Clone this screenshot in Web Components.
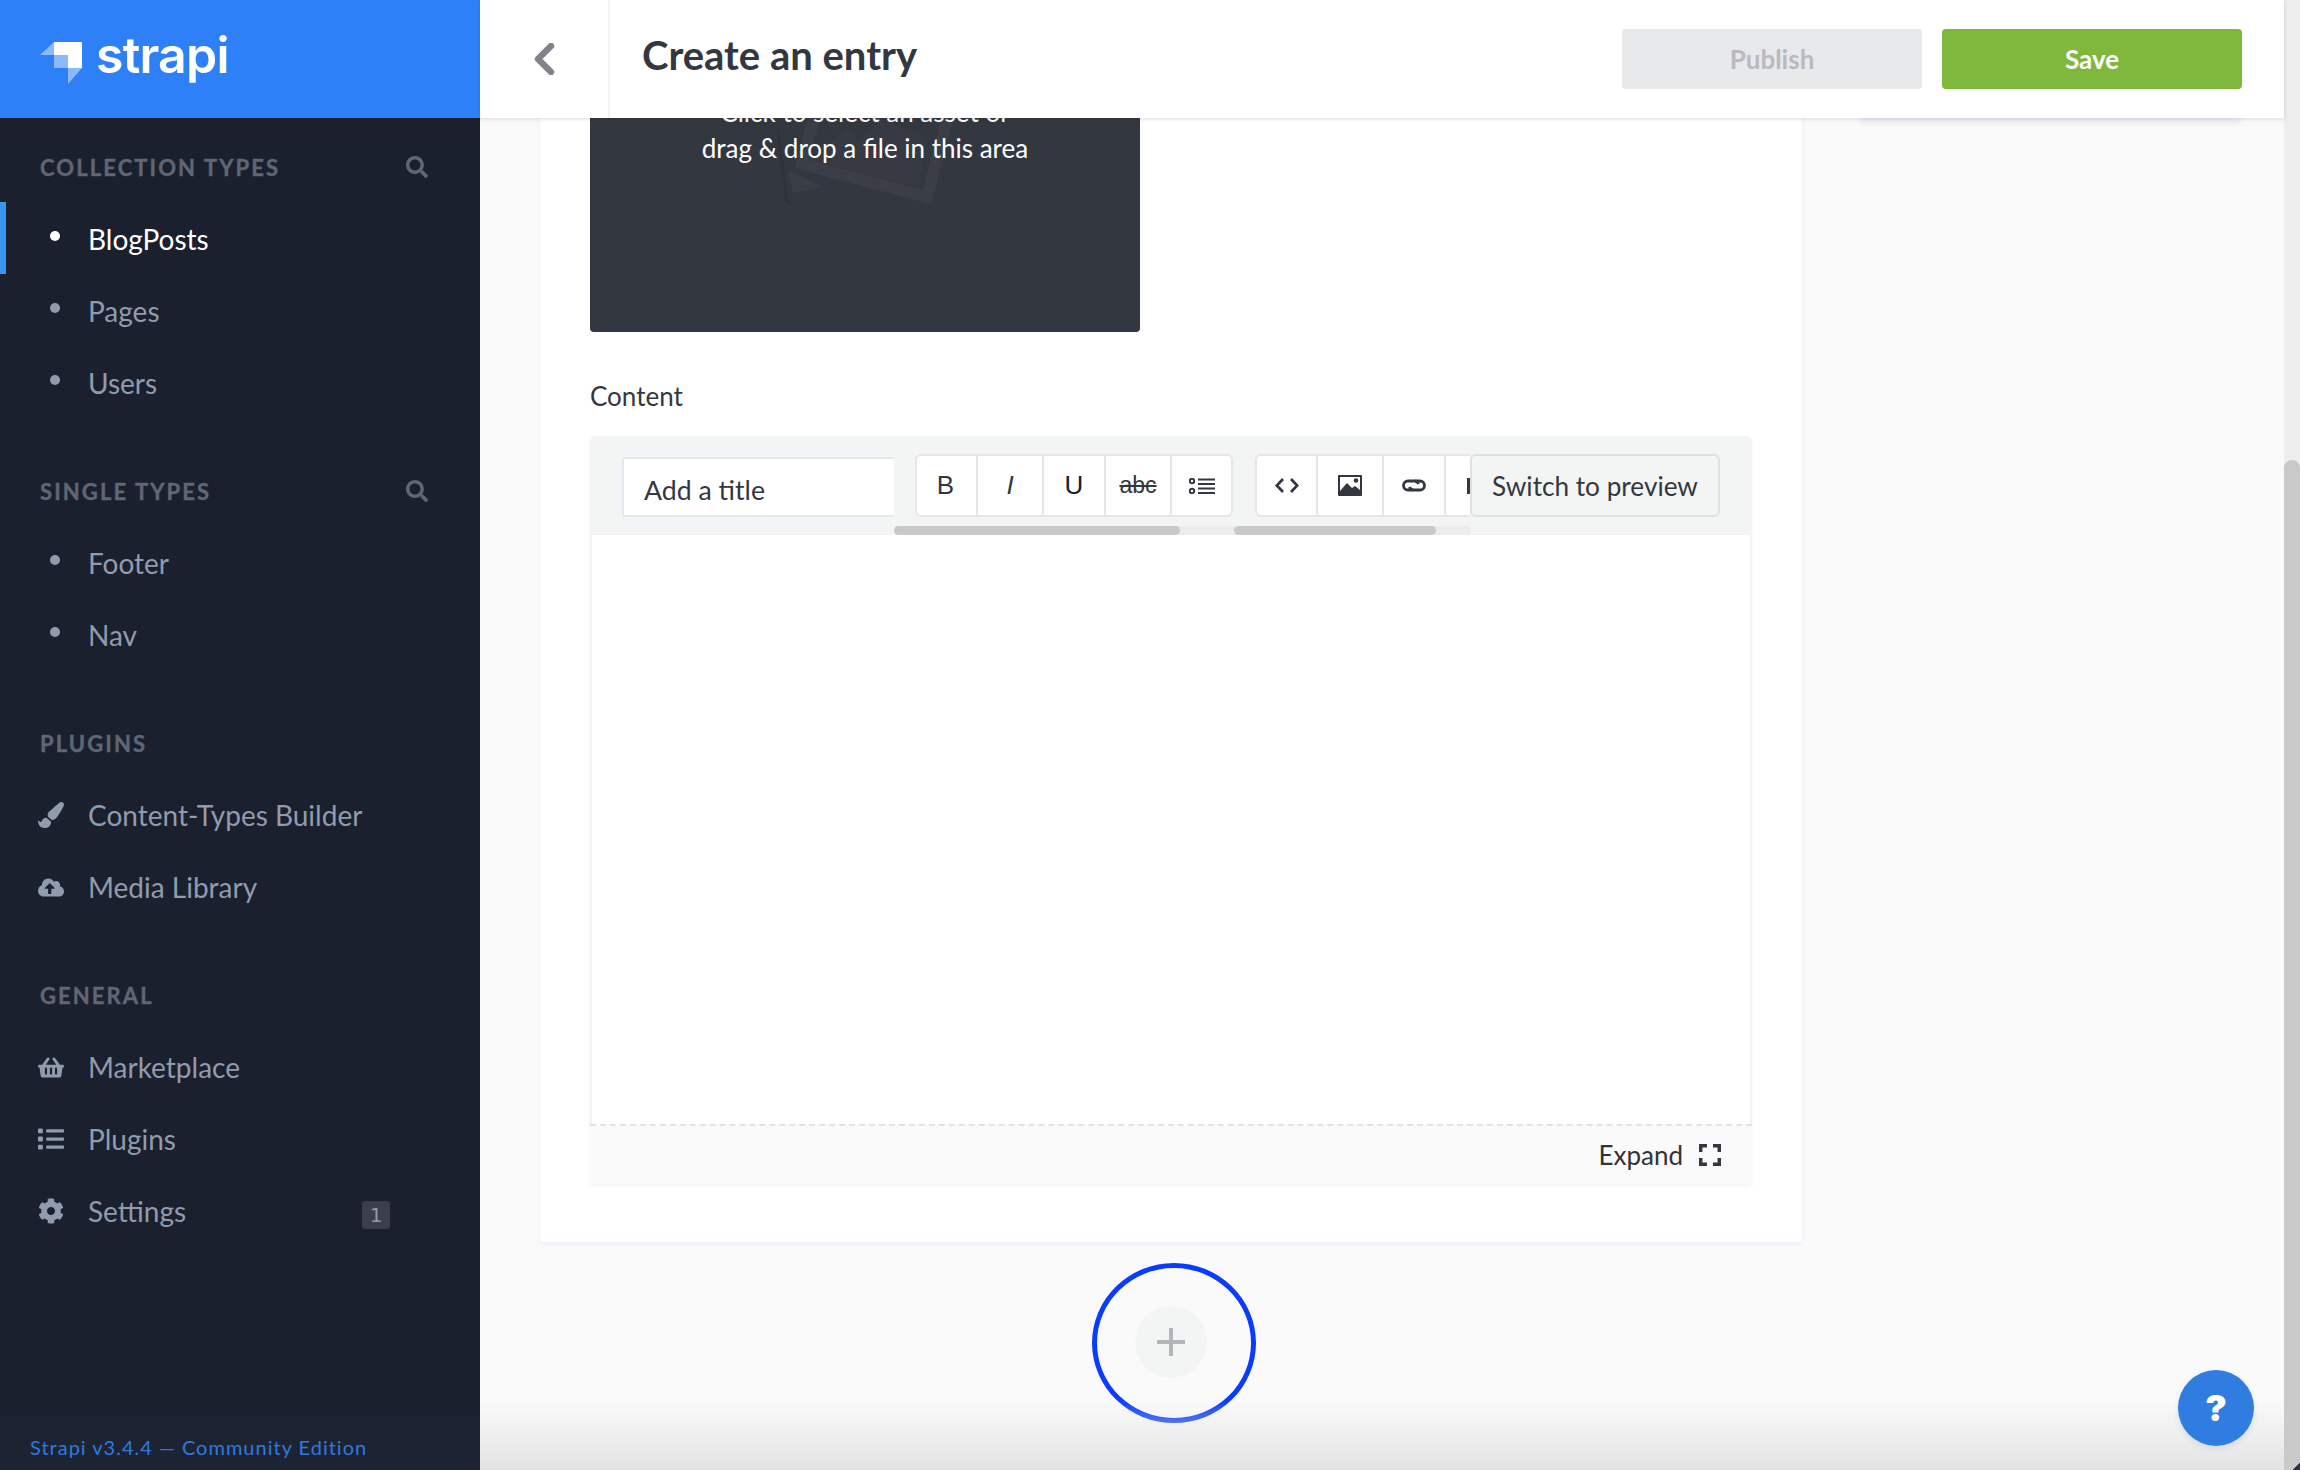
<!DOCTYPE html>
<html>
<head>
<meta charset="utf-8">
<title>Create an entry</title>
<style>
  html, body { margin: 0; height: 100%; overflow: hidden; }
  body { font-family: Lato, "Liberation Sans", sans-serif; }
</style>
</head>
<body>
<app-shell>
  <side-nav slot="side"></side-nav>
  <top-bar slot="top" heading="Create an entry"></top-bar>
  <entry-form slot="content"></entry-form>
  <help-button slot="help"></help-button>
</app-shell>

<script>
const ICONS = {
  search: ['0 0 512 512', 'M505 442.7L405.3 343c-4.5-4.5-10.6-7-17-7H372c27.6-35.3 44-79.7 44-128C416 93.1 322.9 0 208 0S0 93.1 0 208s93.1 208 208 208c48.3 0 92.7-16.4 128-44v16.3c0 6.4 2.5 12.5 7 17l99.7 99.7c9.4 9.4 24.6 9.4 33.9 0l28.3-28.3c9.4-9.4 9.4-24.6.1-34zM208 336c-70.7 0-128-57.2-128-128 0-70.7 57.2-128 128-128 70.7 0 128 57.2 128 128 0 70.7-57.2 128-128 128z'],
  brush: ['0 0 512 512', 'M167.02 309.34c-40.12 2.58-76.53 17.86-97.19 72.3-2.35 6.21-8 9.98-14.59 9.98-11.11 0-45.46-27.67-55.25-34.35C0 439.62 37.93 512 128 512c75.86 0 128-43.77 128-120.19 0-3.11-.65-6.08-.97-9.13l-88.01-73.34zM457.89 0c-15.16 0-29.37 6.71-40.21 16.45C213.27 199.05 192 203.34 192 257.09c0 13.7 3.25 26.76 8.73 38.7l63.82 53.18c7.21 1.8 14.64 3.03 22.39 3.03 62.11 0 98.11-45.47 211.16-256.46 7.38-14.35 13.9-29.85 13.9-45.99C512 20.64 486 0 457.89 0z'],
  cloud: ['0 0 640 512', 'M537.6 226.6c4.1-10.7 6.4-22.4 6.4-34.6 0-53-43-96-96-96-19.7 0-38.1 6-53.3 16.2C367 64.2 315.3 32 256 32c-88.4 0-160 71.6-160 160 0 2.7.1 5.4.2 8.1C40.2 219.8 0 273.2 0 336c0 79.5 64.5 144 144 144h368c70.7 0 128-57.3 128-128 0-61.9-44-113.6-102.4-125.4zM393.4 288H328v112c0 8.8-7.2 16-16 16h-48c-8.8 0-16-7.2-16-16V288h-65.4c-14.3 0-21.4-17.2-11.3-27.3l105.4-105.4c6.2-6.2 16.4-6.2 22.6 0l105.4 105.4c10.1 10.1 2.9 27.3-11.3 27.3z'],
  basket: ['0 0 576 512', 'M576 216v16c0 13.255-10.745 24-24 24h-8l-26.113 182.788C514.509 462.435 494.257 480 470.37 480H105.63c-23.887 0-44.139-17.565-47.518-41.212L32 256h-8c-13.255 0-24-10.745-24-24v-16c0-13.255 10.745-24 24-24h67.341l106.78-146.821c10.395-14.292 30.407-17.453 44.701-7.058 14.293 10.395 17.453 30.408 7.058 44.701L170.477 192h235.046L326.12 82.821c-10.395-14.292-7.234-34.306 7.059-44.701 14.291-10.395 34.306-7.235 44.701 7.058L484.659 192H552c13.255 0 24 10.745 24 24zM312 392V280c0-13.255-10.745-24-24-24s-24 10.745-24 24v112c0 13.255 10.745 24 24 24s24-10.745 24-24zm112 0V280c0-13.255-10.745-24-24-24s-24 10.745-24 24v112c0 13.255 10.745 24 24 24s24-10.745 24-24zm-224 0V280c0-13.255-10.745-24-24-24s-24 10.745-24 24v112c0 13.255 10.745 24 24 24s24-10.745 24-24z'],
  list: ['0 0 512 512', 'M80 368H16a16 16 0 0 0-16 16v64a16 16 0 0 0 16 16h64a16 16 0 0 0 16-16v-64a16 16 0 0 0-16-16zm0-320H16A16 16 0 0 0 0 64v64a16 16 0 0 0 16 16h64a16 16 0 0 0 16-16V64a16 16 0 0 0-16-16zm0 160H16a16 16 0 0 0-16 16v64a16 16 0 0 0 16 16h64a16 16 0 0 0 16-16v-64a16 16 0 0 0-16-16zm416 176H176a16 16 0 0 0-16 16v32a16 16 0 0 0 16 16h320a16 16 0 0 0 16-16v-32a16 16 0 0 0-16-16zm0-320H176a16 16 0 0 0-16 16v32a16 16 0 0 0 16 16h320a16 16 0 0 0 16-16V80a16 16 0 0 0-16-16zm0 160H176a16 16 0 0 0-16 16v32a16 16 0 0 0 16 16h320a16 16 0 0 0 16-16v-32a16 16 0 0 0-16-16z'],
  cog: ['0 0 512 512', 'M487.4 315.7l-42.6-24.6c4.3-23.2 4.3-47 0-70.2l42.6-24.6c4.9-2.8 7.1-8.6 5.5-14-11.1-35.6-30-67.8-54.7-94.6-3.8-4.1-10-5.1-14.8-2.3L380.8 110c-17.9-15.4-38.5-27.3-60.8-35.1V25.8c0-5.6-3.9-10.5-9.4-11.7-36.7-8.2-74.3-7.8-109.2 0-5.5 1.2-9.4 6.1-9.4 11.7V75c-22.2 7.9-42.8 19.8-60.8 35.1L88.7 85.5c-4.9-2.8-11-1.9-14.8 2.3-24.7 26.7-43.6 58.9-54.7 94.6-1.7 5.4.6 11.2 5.5 14L67.3 221c-4.3 23.2-4.3 47 0 70.2l-42.6 24.6c-4.9 2.8-7.1 8.6-5.5 14 11.1 35.6 30 67.8 54.7 94.6 3.8 4.1 10 5.1 14.8 2.3l42.6-24.6c17.9 15.4 38.5 27.3 60.8 35.1v49.2c0 5.6 3.9 10.5 9.4 11.7 36.7 8.2 74.3 7.8 109.2 0 5.5-1.2 9.4-6.1 9.4-11.7v-49.2c22.2-7.9 42.8-19.8 60.8-35.1l42.6 24.6c4.9 2.8 11 1.9 14.8-2.3 24.7-26.7 43.6-58.9 54.7-94.6 1.5-5.5-.7-11.3-5.6-14.1zM256 336c-44.1 0-80-35.9-80-80s35.9-80 80-80 80 35.9 80 80-35.9 80-80 80z']
};

function icon(name, w, h) {
  const [box, d] = ICONS[name];
  return `<svg width="${w}" height="${h}" viewBox="${box}" fill="currentColor"><path d="${d}"/></svg>`;
}

class AppShell extends HTMLElement {
  connectedCallback() {
    this.attachShadow({ mode: 'open' });
    this.shadowRoot.innerHTML = `
      <style>
        :host { display: flex; width: 2300px; height: 1470px; overflow: hidden; background: #fafafb; }
        .side { flex: 0 0 480px; height: 100%; }
        .main { flex: 1; min-width: 0; display: flex; flex-direction: column; position: relative; }
        .scroll { flex: 1; min-height: 0; overflow: hidden; }
        .fade {
          position: absolute; left: 0; right: 0; bottom: 0; height: 70px;
          background: linear-gradient(to bottom, rgba(227,227,228,0), #e3e3e4);
          pointer-events: none;
        }
        .bar { flex: 0 0 16px; background: #ededed; display: flex; flex-direction: column; justify-content: flex-end; }
        .thumb { height: 1010px; border-radius: 8px 8px 0 0; background: linear-gradient(135deg, #c9c9c9 calc(100% - 5px), #3b2a4a calc(100% - 5px)); }
      </style>
      <div class="side"><slot name="side"></slot></div>
      <div class="main">
        <slot name="top"></slot>
        <div class="scroll"><slot name="content"></slot></div>
        <div class="fade"></div>
        <slot name="help"></slot>
      </div>
      <div class="bar"><div class="thumb"></div></div>
    `;
  }
}

class SideNav extends HTMLElement {
  connectedCallback() {
    this.attachShadow({ mode: 'open' });
    const row = (label, lead, active) => `
      <div class="row ${active ? 'active' : ''}">
        <span class="lead">${lead}</span><span>${label}</span>
      </div>`;
    const dot = '<i class="dot"></i>';
    this.shadowRoot.innerHTML = `
      <style>
        :host { display: flex; flex-direction: column; height: 100%; background: #1a202e; color: #919bae; font-size: 28px; }
        .brand { flex: 0 0 118px; background: #2e80f8; display: flex; align-items: center; padding-left: 40px; gap: 14px; color: #fff; box-sizing: border-box; }
        .brand svg { margin-top: 8px; }
        .brand b { font-family: Inter, sans-serif; font-size: 50px; font-weight: 600; letter-spacing: -.8px; line-height: 1; margin-top: -8px; }
        .nav { flex: 1; padding-top: 31px; }
        .head { height: 36px; display: flex; align-items: center; justify-content: space-between; padding: 0 52px 0 40px; margin-bottom: 18px; font-size: 22px; font-weight: 700; letter-spacing: 2.1px; color: #5f6674; -webkit-text-stroke: .4px #5f6674; }
        .head svg { display: block; }
        section { margin-bottom: 54px; }
        section:first-child { margin-bottom: 55px; }
        section:first-child .head { margin-bottom: 17px; }
        section:first-child .row { padding-top: 2px; box-sizing: border-box; }
        .row { height: 72px; display: flex; align-items: center; position: relative; }
        .row.active { color: #fff; box-shadow: inset 6px 0 0 #3a94f2; }
        .lead { width: 50px; margin-left: 38px; display: flex; align-items: center; }
        .dot { width: 10px; height: 10px; border-radius: 50%; background: currentColor; margin: -6px 0 0 12px; }
        .count { margin-left: auto; margin-right: 90px; width: 28px; height: 28px; border-radius: 3px; background: #3a3f4b; font-size: 20px; color: #919bae; display: flex; align-items: center; justify-content: center; font-family: "DejaVu Sans", sans-serif; margin-top: 8px; }
        .foot { flex: 0 0 54px; background: #1c2433; color: #2f78e0; font-size: 20px; letter-spacing: 1px; display: flex; align-items: center; padding-left: 30px; padding-top: 8px; box-sizing: border-box; }
      </style>
      <div class="brand">
        <svg width="42" height="42" viewBox="0 0 42 42">
          <path d="M14 0h28v26H28V13H14z" fill="#fff"/>
          <path d="M14 0v13H0z" fill="#fff" opacity=".45"/>
          <path d="M14 13h14v13H14z" fill="#fff" opacity=".45"/>
          <path d="M28 26h14L28 42z" fill="#fff" opacity=".45"/>
        </svg>
        <b>strapi</b>
      </div>
      <div class="nav">
        <section>
          <div class="head">COLLECTION TYPES ${icon('search', 22, 22)}</div>
          ${row('BlogPosts', dot, true)}${row('Pages', dot)}${row('Users', dot)}
        </section>
        <section>
          <div class="head">SINGLE TYPES ${icon('search', 22, 22)}</div>
          ${row('Footer', dot)}${row('Nav', dot)}
        </section>
        <section>
          <div class="head">PLUGINS</div>
          ${row('Content-Types Builder', icon('brush', 26, 26))}${row('Media Library', icon('cloud', 26, 21))}
        </section>
        <section>
          <div class="head">GENERAL</div>
          ${row('Marketplace', icon('basket', 26, 23))}${row('Plugins', icon('list', 26, 26))}
          <div class="row"><span class="lead">${icon('cog', 26, 26)}</span><span>Settings</span><span class="count">1</span></div>
        </section>
      </div>
      <div class="foot">Strapi v3.4.4 — Community Edition</div>
    `;
  }
}

class TopBar extends HTMLElement {
  connectedCallback() {
    this.attachShadow({ mode: 'open' });
    this.shadowRoot.innerHTML = `
      <style>
        :host { display: flex; flex: 0 0 118px; height: 118px; background: #fff; box-shadow: 0 1px 4px rgba(40,45,60,.16); position: relative; z-index: 5; align-items: center; color: #333740; }
        .back { flex: 0 0 130px; height: 100%; border-right: 2px solid #f3f3f4; box-sizing: border-box; display: flex; align-items: center; justify-content: center; color: #81848c; }
        h1 { margin: -8px 0 0 32px; font-size: 40px; font-weight: 700; flex: 1; }
        button { width: 300px; height: 60px; border: 0; border-radius: 4px; font: 700 26px Lato, sans-serif; margin-left: 20px; }
        .off { background: #e8e9eb; color: #b8babe; }
        .on { background: #7fb83d; color: #fff; margin-right: 42px; }
      </style>
      <div class="back">
        <svg width="22" height="32" viewBox="0 0 22 32"><path d="M18 3L5 16l13 13" fill="none" stroke="currentColor" stroke-width="6.500" stroke-linecap="round" stroke-linejoin="round"/></svg>
      </div>
      <h1>${this.getAttribute('heading')}</h1>
      <button class="off">Publish</button>
      <button class="on">Save</button>
    `;
  }
}

class MdEditor extends HTMLElement {
  connectedCallback() {
    this.attachShadow({ mode: 'open' });
    this.shadowRoot.innerHTML = `
      <style>
        :host { display: block; color: #333740; border-radius: 6px 6px 3px 3px; box-shadow: 0 2px 4px rgba(40,45,60,.06); }
        .tools { height: 99px; background: #f3f4f4; border-radius: 6px 6px 0 0; display: flex; box-sizing: border-box; padding-top: 18px; position: relative; }
        .title { margin: 3px 0 0 32px; width: 272px; height: 60px; background: #fff; border: 2px solid #e3e9f3; border-right: 0; border-radius: 3px 0 0 3px; box-sizing: border-box; padding-left: 20px; font-size: 26.700px; line-height: 58px; padding-top: 2px; }
        .strip { width: 576px; height: 81px; overflow: hidden; position: relative; display: flex; flex-shrink: 0; }
        .group { flex: none; display: flex; height: 63px; box-sizing: border-box; border: 2px solid #e6e6e6; border-radius: 6px; background: #fff; }
        .group span { display: flex; align-items: center; justify-content: center; border-right: 2px solid #e6e6e6; height: 100%; box-sizing: border-box; font-family: "Liberation Sans", sans-serif; font-size: 26px; }
        .group span:last-child { border-right: 0; }
        .a { margin-left: 21px; }
        .b { margin-left: 22px; }
        .track { position: absolute; left: 0; right: 0; bottom: 0; height: 9px; background: #ececec; }
        .t1, .t2 { position: absolute; top: 0; height: 9px; background: #c9c9c9; border-radius: 5px; }
        .t1 { left: 0; width: 286px; }
        .t2 { left: 340px; width: 202px; }
        .switch { width: 250px; height: 63px; box-sizing: border-box; border: 2px solid #dfe1e1; border-radius: 6px; font-size: 26.200px; display: flex; align-items: center; justify-content: center; flex-shrink: 0; background: #f3f4f4; }
        .body { height: 589px; background: #fff; border: solid #f3f3f4; border-width: 0 2px; box-sizing: border-box; }
        .foot { height: 60px; background: #fafafa; border-top: 2px dashed #e3e3e4; box-sizing: border-box; display: flex; align-items: center; justify-content: flex-end; padding-right: 31px; font-size: 26px; gap: 16px; color: #333; }
      </style>
      <div class="tools">
        <div class="title">Add a title</div>
        <div class="strip">
          <div class="group a">
            <span style="width:61px;padding-right:2px">B</span>
            <span style="width:66px"><i>I</i></span>
            <span style="width:62px;color:#1a202e">U</span>
            <span style="width:66px;font-size:23px;text-decoration:line-through">abc</span>
            <span style="width:59px">
              <svg width="26" height="16" viewBox="0 0 26 16" fill="none" stroke="#333740" stroke-width="2"><circle cx="3" cy="3" r="2.200"/><circle cx="3" cy="13" r="2.200"/><path d="M9 1.500h17M9 6h17M9 10.500h17M9 15h17"/></svg>
            </span>
          </div>
          <div class="group b">
            <span style="width:61px">
              <svg width="24" height="15" viewBox="0 0 24 15" fill="none" stroke="#333740" stroke-width="2.700"><path d="M8 1L1.800 7.500 8 14M16 1L22.200 7.500 16 14"/></svg>
            </span>
            <span style="width:66px">
              <svg width="24" height="21" viewBox="0 0 24 21"><rect width="24" height="21" rx="1" fill="#333740"/><rect x="2" y="2" width="20" height="17" fill="#fff"/><path d="M2 19v-3l7-8 5 5 3-2 5 4v4z" fill="#333740"/><circle cx="18" cy="5.500" r="2.300" fill="#333740"/></svg>
            </span>
            <span style="width:62px">
              <svg width="24" height="13" viewBox="0 0 24 13" fill="none" stroke="#333740" stroke-width="2.800"><path d="M11 11H6a4.500 4.500 0 010-9h6.500a4.500 4.500 0 014 3"/><path d="M13 2h5a4.500 4.500 0 010 9h-6.500a4.500 4.500 0 01-4-3"/></svg>
            </span>
            <span style="width:62px;justify-content:flex-start;padding-left:21px"><i style="width:3px;height:16px;background:#333740"></i></span>
          </div>
          <div class="track"><div class="t1"></div><div class="t2"></div></div>
        </div>
        <div class="switch">Switch to preview</div>
      </div>
      <div class="body"></div>
      <div class="foot">Expand
        <svg width="22" height="22" viewBox="0 0 22 22" fill="none" stroke="#333740" stroke-width="3.500"><path d="M1.700 8V1.700H8M14 1.700h6.300V8M20.300 14v6.300H14M8 20.300H1.700V14"/></svg>
      </div>
    `;
  }
}

class EntryForm extends HTMLElement {
  connectedCallback() {
    this.attachShadow({ mode: 'open' });
    this.shadowRoot.innerHTML = `
      <style>
        :host { display: flex; gap: 58px; padding-left: 60px; color: #333740; }
        .left { width: 1262px; flex: none; }
        .card { margin-top: -40px; background: #fff; padding: 0 50px 58px; border-radius: 3px; box-shadow: 0 2px 4px rgba(227,233,243,.7); }
        .upload { width: 550px; height: 254px; background: #333740; border-radius: 0 0 4px 4px; color: #fff; font-size: 26px; line-height: 36px; text-align: center; padding-top: 16px; box-sizing: border-box; position: relative; overflow: hidden; }
        .upload svg { position: absolute; left: 0; top: 0; }
        .upload div { position: relative; }
        label { display: block; margin: 46px 0 22px; font-size: 26px; line-height: 36px; }
        .add { width: 72px; height: 72px; border-radius: 50%; background: #f3f4f4; margin: 64px auto 0; position: relative; display: flex; align-items: center; justify-content: center; }
        .ring { position: absolute; left: -43px; top: -43px; width: 164px; height: 160px; box-sizing: border-box; border: 5px solid #0a3cff; border-radius: 50%; }
        .right { width: 380px; flex: none; height: 3px; margin-top: -3px; box-shadow: 0 3px 6px rgba(190,195,225,.7); background: #fff; }
      </style>
      <div class="left">
        <div class="card">
          <div class="upload">
            <svg width="550" height="254" viewBox="0 0 550 254" fill="none">
              <path d="M188 52l9 72 4 3" stroke="#2f3239" stroke-width="2"/>
              <path d="M203 115l30-6-35-17z" fill="#3b3e47"/>
              <path d="M222 82l35-34 11 16 24-24 43 20-5 50z" fill="#373a43"/>
              <path d="M212 86l125 33 23-89-125-33z" stroke="#3b3e47" stroke-width="12"/>
            </svg>
            <div>Click to select an asset or<br>drag &amp; drop a file in this area</div>
          </div>
          <label>Content</label>
          <md-editor></md-editor>
        </div>
        <div class="add">
          <svg width="28" height="28" viewBox="0 0 28 28"><path d="M12 0h4v12h12v4H16v12h-4V16H0v-4h12z" fill="#b3b5b9"/></svg>
          <div class="ring"></div>
        </div>
      </div>
      <div class="right"></div>
    `;
  }
}

class HelpButton extends HTMLElement {
  connectedCallback() {
    this.attachShadow({ mode: 'open' });
    this.shadowRoot.innerHTML = `
      <style>
        :host { position: absolute; left: 1698px; top: 1370px; width: 76px; height: 76px; border-radius: 50%; background: #2f7de1; color: #fff; font: 900 36px Inter, sans-serif; display: flex; align-items: center; justify-content: center; box-shadow: 0 2px 6px rgba(40,60,100,.12); }
      </style>
      ?
    `;
  }
}

customElements.define('app-shell', AppShell);
customElements.define('side-nav', SideNav);
customElements.define('top-bar', TopBar);
customElements.define('md-editor', MdEditor);
customElements.define('entry-form', EntryForm);
customElements.define('help-button', HelpButton);
</script>
</body>
</html>
